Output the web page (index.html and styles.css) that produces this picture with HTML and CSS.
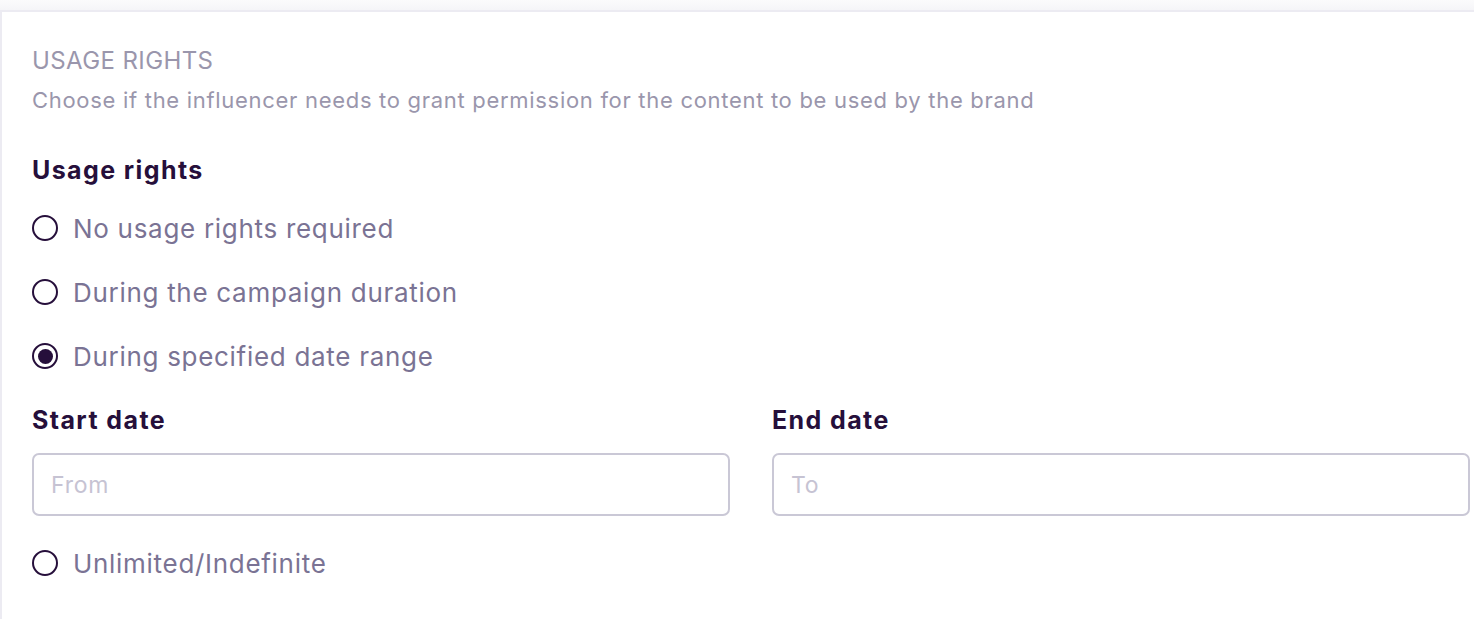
FILE: index.html
```html
<!DOCTYPE html>
<html lang="en">
<head>
    <meta charset="UTF-8">
    <meta name="viewport" content="width=device-width, initial-scale=1.0">
    <title>Usage rights</title>
    <link rel="stylesheet" href="styles.css">
</head>
<body>
    <div class="top-strip"></div>

    <section class="card">
        <h2 class="section-title">USAGE RIGHTS</h2>
        <p class="section-desc">Choose if the influencer needs to grant permission for the content to be used by the brand</p>

        <div class="field-label">Usage rights</div>

        <div class="radio-list">
            <label class="radio-row">
                <span class="radio"></span>
                <span class="radio-text">No usage rights required</span>
            </label>
            <label class="radio-row">
                <span class="radio"></span>
                <span class="radio-text">During the campaign duration</span>
            </label>
            <label class="radio-row">
                <span class="radio checked"></span>
                <span class="radio-text">During specified date range</span>
            </label>
        </div>

        <div class="date-range">
            <div class="date-field">
                <div class="field-label">Start date</div>
                <input class="date-input" type="text" placeholder="From">
            </div>
            <div class="date-field">
                <div class="field-label">End date</div>
                <input class="date-input" type="text" placeholder="To">
            </div>
        </div>

        <label class="radio-row last">
            <span class="radio"></span>
            <span class="radio-text">Unlimited/Indefinite</span>
        </label>
    </section>
</body>
</html>
```

FILE: styles.css
```css
body {
    margin: 0;
    padding: 0;
    font-family: "Inter", "Noto Sans", sans-serif;
    background-color: #fff;
    overflow: hidden;
}

.top-strip {
    height: 10px;
    background: linear-gradient(#fbfbfc, #f5f5f8);
    border-bottom: 2px solid #ecebf2;
}

.card {
    background-color: #fff;
    border-left: 2px solid #ecebf2;
    padding: 34px 4px 40px 30px;
}

.section-title {
    margin: 0;
    font-size: 24px;
    font-weight: 400;
    letter-spacing: 0.4px;
    color: #9a96ac;
    line-height: 30px;
}

.section-desc {
    margin: 10px 0 0;
    font-size: 22px;
    letter-spacing: 0.7px;
    color: #9a96ac;
    line-height: 28px;
}

.field-label {
    font-size: 25px;
    font-weight: 700;
    letter-spacing: 1.4px;
    color: #260f3b;
    line-height: 32px;
}

.section-desc + .field-label {
    margin-top: 40px;
}

.radio-list {
    margin-top: 26px;
    display: flex;
    flex-direction: column;
    gap: 32px;
}

.radio-row {
    display: flex;
    align-items: center;
    gap: 15px;
    height: 32px;
}

.radio {
    box-sizing: border-box;
    width: 26px;
    height: 26px;
    border: 2px solid #260f3b;
    border-radius: 50%;
    flex-shrink: 0;
    display: flex;
    align-items: center;
    justify-content: center;
}

.radio.checked::after {
    content: "";
    width: 15px;
    height: 15px;
    border-radius: 50%;
    background-color: #260f3b;
}

.radio-text {
    font-size: 26px;
    letter-spacing: 0.7px;
    color: #7a7394;
}

.date-range {
    margin-top: 32px;
    display: grid;
    grid-template-columns: 1fr 1fr;
    gap: 42px;
}

.date-input {
    display: block;
    box-sizing: border-box;
    width: 100%;
    height: 63px;
    margin-top: 17px;
    padding: 0 17px;
    border: 2px solid #cac8d6;
    border-radius: 7px;
    font-family: inherit;
    font-size: 23px;
    letter-spacing: 0.8px;
    color: #260f3b;
    outline: none;
}

.date-input::placeholder {
    color: #c6c3d3;
}

.radio-row.last {
    margin-top: 31px;
}
```
